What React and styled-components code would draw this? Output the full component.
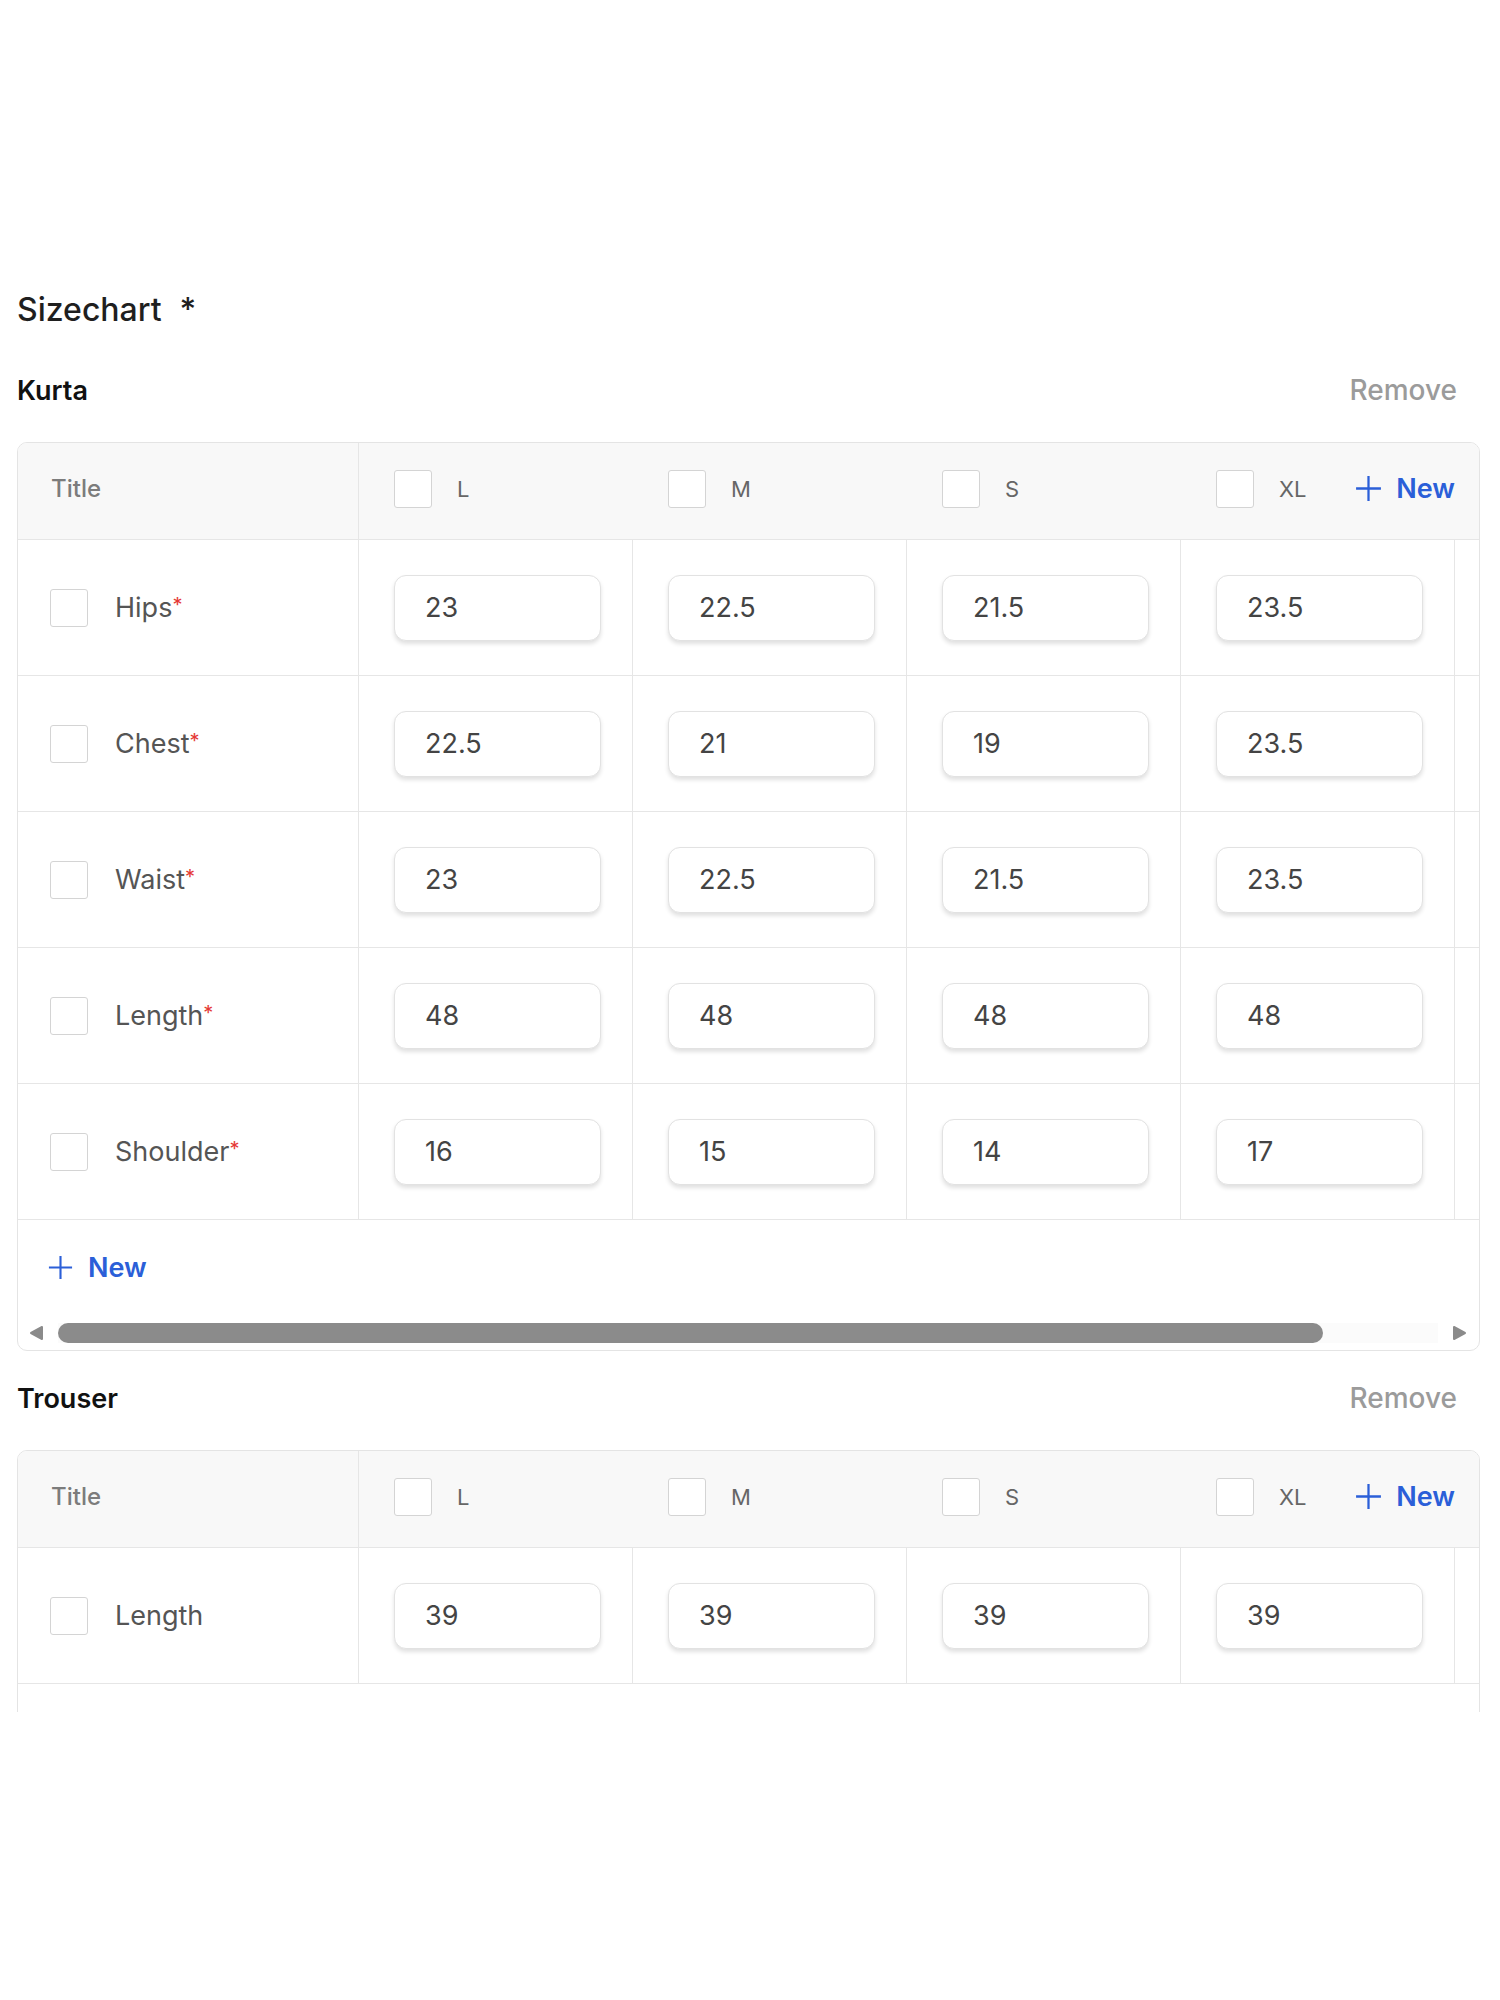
import React from "react";
import styled, { createGlobalStyle } from "styled-components";

const GlobalStyle = createGlobalStyle`
  body {
    margin: 0;
    background: #fff;
    font-family: Inter, "Noto Sans", sans-serif;
  }
  * { box-sizing: border-box; }
`;

const Page = styled.div`
  width: 1500px;
  height: 1712px;
  overflow: hidden;
  padding: 290px 20px 0 17px;
`;

const Heading = styled.div`
  height: 40px;
  line-height: 40px;
  font-size: 32px;
  font-weight: 500;
  color: #1f1f1f;
  margin-bottom: 40px;

  span {
    margin-left: 18px;
  }
`;

const Section = styled.section`
  margin-bottom: 27px;
`;

const SectionHead = styled.div`
  height: 40px;
  display: flex;
  align-items: center;
  justify-content: space-between;
  margin-bottom: 32px;
`;

const SectionName = styled.div`
  font-size: 27px;
  font-weight: 600;
  color: #111;
`;

const RemoveButton = styled.button`
  border: 0;
  background: none;
  padding: 0;
  margin-right: 23px;
  font-family: inherit;
  font-size: 28px;
  font-weight: 500;
  color: #9b9b9b;
  cursor: pointer;
`;

const Table = styled.div`
  border: 1px solid #e4e4e4;
  border-radius: 10px;
  overflow: hidden;
`;

const Inner = styled.div`
  width: 1613px;
`;

const HeadRow = styled.div`
  display: flex;
  height: 97px;
  padding-bottom: 5px;
  background: #f8f8f8;
  border-bottom: 1px solid #e6e6e6;
`;

const TitleHead = styled.div`
  width: 341px;
  flex: none;
  display: flex;
  align-items: center;
  padding-left: 33px;
  margin-bottom: -5px;
  padding-bottom: 5px;
  border-right: 1px solid #e6e6e6;
  font-size: 24px;
  font-weight: 500;
  color: #7c7c7c;
`;

const SizeHead = styled.div`
  width: 274px;
  flex: none;
  display: flex;
  align-items: center;
  padding-left: 35px;
`;

const SizeLabel = styled.span`
  margin-left: 25px;
  font-size: 22px;
  color: #666;
`;

const Checkbox = styled.span`
  width: 38px;
  height: 38px;
  flex: none;
  border: 1.5px solid #d4d4d4;
  border-radius: 3px;
  background: #fff;
`;

const AddButton = styled.button`
  display: flex;
  align-items: center;
  gap: ${({ $gap }) => $gap}px;
  margin-left: ${({ $push }) => ($push ? "auto" : "0")};
  border: 0;
  background: none;
  padding: 0;
  font-family: inherit;
  font-size: 27px;
  font-weight: 600;
  color: #2b5fd8;
  cursor: pointer;
`;

const Row = styled.div`
  display: flex;
  height: 136px;
  border-bottom: 1px solid #e6e6e6;
`;

const TitleCell = styled.div`
  width: 341px;
  flex: none;
  display: flex;
  align-items: center;
  padding-left: 32px;
  border-right: 1px solid #e6e6e6;
`;

const RowLabel = styled.span`
  margin-left: 27px;
  font-size: 27px;
  color: #555;

  em {
    font-style: normal;
    font-size: 20px;
    color: #e53935;
    vertical-align: 5px;
  }
`;

const ValueCell = styled.div`
  width: 274px;
  flex: none;
  display: flex;
  align-items: center;
  padding-left: 35px;
  border-right: 1px solid #e6e6e6;
`;

const Filler = styled.div`
  flex: 1;
`;

const ValueInput = styled.input`
  width: 207px;
  height: 66px;
  padding: 0 0 0 30px;
  border: 1px solid #e2e2e2;
  border-radius: 12px;
  box-shadow: 0 3px 4px rgba(0, 0, 0, 0.12);
  background: #fff;
  font-family: inherit;
  font-size: 27px;
  color: #444;
  outline: none;
`;

const FootRow = styled.div`
  height: 95px;
  display: flex;
  align-items: center;
  padding-left: 29px;
`;

const ScrollBar = styled.div`
  height: 35px;
  display: flex;
  align-items: center;
  gap: 13px;
  padding: 0 11px 0 10px;
`;

const Track = styled.div`
  flex: 1;
  height: 20px;
  background: #fbfbfb;
`;

const Thumb = styled.div`
  height: 20px;
  border-radius: 10px;
  background: #8b8b8b;
`;

const PlusIcon = ({ size = 28 }) => (
  <svg width={size} height={size} viewBox="0 0 28 28" fill="none">
    <path d="M14 2v24M2 14h24" stroke="currentColor" strokeWidth="2.2" />
  </svg>
);

const Arrow = ({ dir }) => (
  <svg width="17" height="18" viewBox="0 0 17 18">
    <path
      d={dir === "left" ? "M3 9 L14 3 L14 15 Z" : "M14 9 L3 3 L3 15 Z"}
      fill="#8b8b8b"
      stroke="#8b8b8b"
      strokeWidth="2"
      strokeLinejoin="round"
    />
  </svg>
);

const sizes = ["L", "M", "S", "XL"];

// the trouser table runs past the bottom of the visible area, so its footer stays empty
const charts = [
  {
    name: "Kurta",
    footer: true,
    rows: [
      { title: "Hips", required: true, values: ["23", "22.5", "21.5", "23.5"] },
      { title: "Chest", required: true, values: ["22.5", "21", "19", "23.5"] },
      { title: "Waist", required: true, values: ["23", "22.5", "21.5", "23.5"] },
      { title: "Length", required: true, values: ["48", "48", "48", "48"] },
      { title: "Shoulder", required: true, values: ["16", "15", "14", "17"] },
    ],
  },
  {
    name: "Trouser",
    footer: false,
    rows: [{ title: "Length", required: false, values: ["39", "39", "39", "39"] }],
  },
];

const ChartTable = ({ chart }) => (
  <Section>
    <SectionHead>
      <SectionName>{chart.name}</SectionName>
      <RemoveButton>Remove</RemoveButton>
    </SectionHead>
    <Table>
      <Inner>
        <HeadRow>
          <TitleHead>Title</TitleHead>
          {sizes.map((size, i) => (
            <SizeHead key={size}>
              <Checkbox />
              <SizeLabel>{size}</SizeLabel>
              {i === sizes.length - 1 && (
                <AddButton $gap={13} $push>
                  <PlusIcon size={29} />
                  New
                </AddButton>
              )}
            </SizeHead>
          ))}
        </HeadRow>
        {chart.rows.map((row) => (
          <Row key={row.title}>
            <TitleCell>
              <Checkbox />
              <RowLabel>
                {row.title}
                {row.required && <em>*</em>}
              </RowLabel>
            </TitleCell>
            {row.values.map((value, i) => (
              <ValueCell key={i}>
                <ValueInput defaultValue={value} readOnly />
              </ValueCell>
            ))}
            <Filler />
          </Row>
        ))}
      </Inner>
      <FootRow>
        {chart.footer && (
          <AddButton $gap={14}>
            <PlusIcon size={27} />
            New
          </AddButton>
        )}
      </FootRow>
      <ScrollBar>
        <Arrow dir="left" />
        <Track>
          <Thumb style={{ width: "91.7%" }} />
        </Track>
        <Arrow dir="right" />
      </ScrollBar>
    </Table>
  </Section>
);

export default function App() {
  return (
    <>
      <GlobalStyle />
      <Page>
        <Heading>
          Sizechart<span>*</span>
        </Heading>
        {charts.map((chart) => (
          <ChartTable key={chart.name} chart={chart} />
        ))}
      </Page>
    </>
  );
}
